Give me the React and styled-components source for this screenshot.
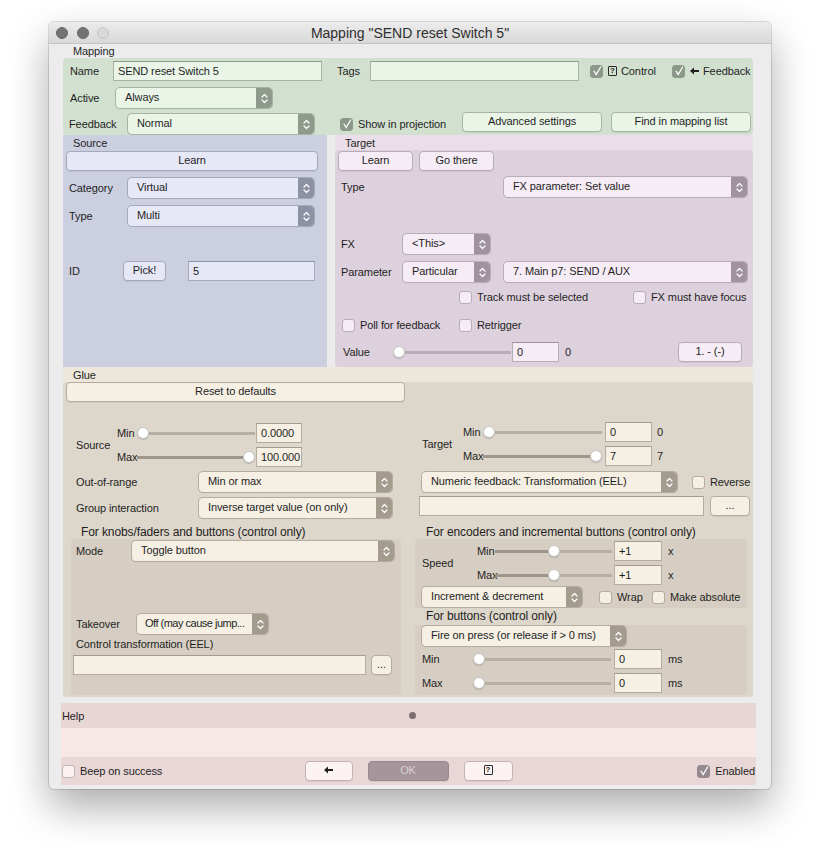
import React from 'react';
import styled, { createGlobalStyle, ThemeProvider } from 'styled-components';

// palettes for each coloured block of the dialog
const green = { ctrl: '#eaf5e8', border: '#a8b3a5', arrow: '#8e9a8c', check: '#8c988a', track: '#aab4a8', fill: '#97a195' };
const blue = { ctrl: '#e6e8f6', border: '#a5a9b9', arrow: '#8d91a4', check: '#8d91a4', track: '#aaaebf', fill: '#989cae' };
const pink = { ctrl: '#f5ecf5', border: '#b8acb8', arrow: '#a0929f', check: '#a0929f', track: '#b8acb7', fill: '#a1959f' };
const beige = { ctrl: '#f5efe4', border: '#b4ac9f', arrow: '#a39b8e', check: '#a39b8e', track: '#b7afa3', fill: '#9e968a' };
const rose = { ctrl: '#fcf2f1', border: '#c2b4b4', arrow: '#a3959a', check: '#978a8e', track: '#c0b2b2', fill: '#a89a9c' };

const GlobalStyle = createGlobalStyle`
  html, body { margin: 0; background: #fff; }
  body {
    font-family: "Liberation Sans", Arial, sans-serif;
    font-size: 11px;
    letter-spacing: -0.1px;
    color: #1f1f1f;
  }
`;

const Page = styled.div`
  padding: 22px 0 60px 49px;
`;

const Window = styled.div`
  width: 722px;
  height: 767px;
  background: #ececec;
  border-radius: 5px;
  overflow: hidden;
  display: flex;
  flex-direction: column;
  box-shadow: 0 0 0 1px rgba(0, 0, 0, 0.13), 0 18px 40px rgba(0, 0, 0, 0.33);
`;

const TitleBar = styled.div`
  height: 22px;
  flex: none;
  box-sizing: border-box;
  display: grid;
  grid-template-columns: 1fr auto 1fr;
  align-items: center;
  background: linear-gradient(#ececec, #d8d8d8);
  border-bottom: 1px solid #c3c3c3;
`;

const Lights = styled.div`
  display: flex;
  gap: 8.5px;
  padding-left: 7px;
`;

const Light = styled.span`
  width: 12px;
  height: 12px;
  border-radius: 50%;
  box-sizing: border-box;
  background: ${p => (p.$off ? '#d9d9d9' : '#737376')};
  border: 1px solid ${p => (p.$off ? '#c6c6c6' : '#68686b')};
`;

const Title = styled.div`
  font-size: 14px;
  letter-spacing: 0;
  color: #2e2e2e;
  white-space: nowrap;
`;

const Content = styled.div`
  padding: 0 18px 0 14px;
  display: flex;
  flex-direction: column;
`;

const Section = styled.div`
  background: ${p => p.$bg || 'transparent'};
  width: ${p => (p.$w ? `${p.$w}px` : 'auto')};
  flex: none;
  display: flex;
  flex-direction: column;
`;

const SectionLabel = styled.div`
  height: ${p => p.$h || 14}px;
  line-height: ${p => (p.$h || 14) + (p.$drop || 0) * 2}px;
  padding-left: 10px;
  white-space: nowrap;
`;

const Panel = styled.div`
  background: ${p => p.$bg};
  border-radius: 4px;
  padding-bottom: ${p => p.$pb || 0}px;
  flex: 1;
  display: flex;
  flex-direction: column;
`;

const Split = styled.div`
  display: flex;
  gap: 8px;
  height: 232px;
`;

const Row = styled.div`
  display: flex;
  align-items: center;
  height: ${p => p.$h || 20}px;
  margin-top: ${p => p.$mt || 0}px;
  padding-left: ${p => p.$pl || 0}px;
  flex: none;
`;

const Label = styled.span`
  width: ${p => (p.$w ? `${p.$w}px` : 'auto')};
  flex: none;
  white-space: nowrap;
`;

const Spacer = styled.span`
  width: ${p => p.$w}px;
  flex: none;
`;

const Field = styled.div`
  width: ${p => p.$w}px;
  height: ${p => p.$h || 20}px;
  flex: none;
  box-sizing: border-box;
  background: ${p => p.theme.ctrl};
  border: 1px solid ${p => p.theme.border};
  border-top-color: ${p => p.theme.arrow};
  padding-left: 4px;
  display: flex;
  align-items: center;
  white-space: nowrap;
`;

const Button = styled.div`
  width: ${p => p.$w}px;
  height: 20px;
  flex: none;
  box-sizing: border-box;
  padding-bottom: 2px;
  margin-top: ${p => (p.$raise ? -4 : 0)}px;
  border-radius: 4px;
  display: flex;
  align-items: center;
  justify-content: center;
  white-space: nowrap;
  background: ${p => (p.$disabled ? '#a4969a' : p.theme.ctrl)};
  color: ${p => (p.$disabled ? '#d9cfd2' : '#1f1f1f')};
  border: 1px solid ${p => (p.$disabled ? '#978a8e' : p.theme.border)};
  box-shadow: 0 1px 0 rgba(0, 0, 0, 0.06);
`;

const SelectBox = styled.div`
  width: ${p => p.$w}px;
  height: 20px;
  flex: none;
  box-sizing: border-box;
  display: flex;
  border-radius: 4px;
  overflow: hidden;
  background: ${p => p.theme.ctrl};
  box-shadow: 0 0 0 1px ${p => p.theme.border}, 0 1px 1px rgba(0, 0, 0, 0.12);
`;

const SelectText = styled.span`
  flex: 1;
  min-width: 0;
  padding-left: ${p => (p.$tight ? 8 : 9)}px;
  letter-spacing: ${p => (p.$tight ? '-0.5px' : 'inherit')};
  line-height: 18px;
  white-space: nowrap;
  overflow: hidden;
`;

const SelectArrow = styled.span`
  width: 16px;
  flex: none;
  display: flex;
  align-items: center;
  justify-content: center;
  background: ${p => p.theme.arrow};
`;

const ToggleWrap = styled.span`
  display: flex;
  align-items: center;
  gap: 5px;
  flex: none;
  width: ${p => (p.$w ? `${p.$w}px` : 'auto')};
  white-space: nowrap;
`;

const CheckBox = styled.span`
  width: 13px;
  height: 13px;
  flex: none;
  box-sizing: border-box;
  border-radius: 3px;
  display: flex;
  align-items: center;
  justify-content: center;
  background: ${p => (p.$on ? p.theme.check : p.theme.ctrl)};
  border: 1px solid ${p => (p.$on ? p.theme.check : p.theme.border)};
`;

const ToggleText = styled.span`
  display: inline-flex;
  align-items: center;
  gap: 4px;
`;

const HelpGlyph = styled.span`
  width: 9px;
  height: 10px;
  box-sizing: border-box;
  border: 1px solid #2a2a2a;
  border-radius: 1px;
  font-size: 8px;
  font-weight: bold;
  line-height: 8px;
  display: inline-flex;
  align-items: center;
  justify-content: center;
`;

const SliderTrack = styled.div`
  width: ${p => p.$w}px;
  height: 20px;
  flex: none;
  display: flex;
  align-items: center;
`;

const SliderFill = styled.span`
  flex: ${p => p.$grow} 1 0;
  height: 3px;
  background: ${p => p.theme.fill};
`;

const SliderRest = styled.span`
  flex: ${p => p.$grow} 1 0;
  height: 3px;
  background: ${p => p.theme.track};
`;

const Thumb = styled.span`
  width: 12px;
  height: 12px;
  flex: none;
  box-sizing: border-box;
  border-radius: 50%;
  background: #fff;
  border: 1px solid rgba(0, 0, 0, 0.22);
  box-shadow: 0 1px 1px rgba(0, 0, 0, 0.15);
`;

const RangeGroup = styled.div`
  display: flex;
  align-items: center;
  margin-top: ${p => p.$mt || 0}px;
  padding-left: ${p => p.$pl || 0}px;
`;

const RangeRows = styled.div`
  display: flex;
  flex-direction: column;
  gap: 4px;
`;

const Columns = styled.div`
  display: flex;
`;

const Column = styled.div`
  width: ${p => (p.$w ? `${p.$w}px` : 'auto')};
  flex: ${p => (p.$w ? 'none' : '1')};
  display: flex;
  flex-direction: column;
`;

const SubHeading = styled.div`
  height: ${p => p.$h || 13}px;
  line-height: ${p => p.$h || 13}px;
  margin-top: ${p => p.$mt || 0}px;
  padding-left: ${p => p.$pl || 0}px;
  font-size: 12px;
  white-space: nowrap;
`;

const SubBox = styled.div`
  width: ${p => p.$w}px;
  height: ${p => p.$h}px;
  margin-left: ${p => p.$ml || 0}px;
  background: #d6cec2;
  border-radius: 4px;
  display: flex;
  flex-direction: column;
`;

const Help = styled.div`
  margin: 6px -3px 0 -2px;
  display: flex;
  flex-direction: column;
`;

const HelpBar = styled.div`
  height: 25px;
  background: #e8d6d5;
  display: grid;
  grid-template-columns: 1fr auto 1fr;
  align-items: center;
  padding-left: 1px;
`;

const HelpDot = styled.span`
  width: 7px;
  height: 7px;
  margin-left: 7px;
  border-radius: 50%;
  background: #7b6e71;
`;

const HelpText = styled.div`
  height: 29px;
  background: #f7e7e5;
`;

const Footer = styled.div`
  height: 28px;
  background: #e8d7d6;
  display: grid;
  grid-template-columns: 1fr auto 1fr;
  align-items: center;
  padding: 0 1px;
`;

const FooterButtons = styled.div`
  display: flex;
  gap: 15px;
`;

const FooterSide = styled.div`
  display: flex;
  justify-content: ${p => (p.$end ? 'flex-end' : 'flex-start')};
`;

const Chevrons = () => (
  <svg width="7" height="11" viewBox="0 0 7 11" fill="none" stroke="#fff" strokeWidth="1.2" strokeLinecap="round" strokeLinejoin="round">
    <path d="M1 4 3.5 1.5 6 4" />
    <path d="M1 7 3.5 9.5 6 7" />
  </svg>
);

const ArrowLeft = () => (
  <svg width="9" height="8" viewBox="0 0 9 8">
    <path d="M0 4 4 0.5V3H9V5H4V7.5Z" fill="#1f1f1f" />
  </svg>
);

const Tick = () => (
  <svg width="10" height="10" viewBox="0 0 10 10">
    <path d="M2 5.2 4.2 8.6 8.6 1" fill="none" stroke="#fff" strokeWidth="1.2" strokeLinecap="round" />
  </svg>
);

function Select({ w, tight, children }) {
  return (
    <SelectBox $w={w}>
      <SelectText $tight={tight}>{children}</SelectText>
      <SelectArrow><Chevrons /></SelectArrow>
    </SelectBox>
  );
}

function Toggle({ on, w, children }) {
  return (
    <ToggleWrap $w={w}>
      <CheckBox $on={on}>{on && <Tick />}</CheckBox>
      <ToggleText>{children}</ToggleText>
    </ToggleWrap>
  );
}

function Slider({ w, pos }) {
  return (
    <SliderTrack $w={w}>
      <SliderFill $grow={pos} />
      <Thumb />
      <SliderRest $grow={1 - pos} />
    </SliderTrack>
  );
}

export default function App() {
  return (
    <>
      <GlobalStyle />
      <Page>
        <Window>
          <TitleBar>
            <Lights>
              <Light />
              <Light />
              <Light $off />
            </Lights>
            <Title>Mapping "SEND reset Switch 5"</Title>
            <span />
          </TitleBar>

          <Content>
            <ThemeProvider theme={green}>
              <Section>
                <SectionLabel>Mapping</SectionLabel>
                <Panel $bg="#d2e1cf" $pb={1}>
                  <Row $mt={3} $pl={7}>
                    <Label $w={43}>Name</Label>
                    <Field $w={209}>SEND reset Switch 5</Field>
                    <Spacer $w={15} />
                    <Label $w={33}>Tags</Label>
                    <Field $w={209} />
                    <Spacer $w={11} />
                    <Toggle on w={82}><HelpGlyph>?</HelpGlyph>Control</Toggle>
                    <Toggle on><ArrowLeft />Feedback</Toggle>
                  </Row>
                  <Row $mt={7} $pl={7}>
                    <Label $w={46}>Active</Label>
                    <Select w={156}>Always</Select>
                  </Row>
                  <Row $mt={6} $pl={6}>
                    <Label $w={59}>Feedback</Label>
                    <Select w={186}>Normal</Select>
                    <Spacer $w={26} />
                    <Toggle on w={122}>Show in projection</Toggle>
                    <Button $w={140} $raise>Advanced settings</Button>
                    <Spacer $w={9} />
                    <Button $w={140} $raise>Find in mapping list</Button>
                  </Row>
                </Panel>
              </Section>
            </ThemeProvider>

            <Split>
              <ThemeProvider theme={blue}>
                <Section $w={264} $bg="#cbcfe0">
                  <SectionLabel $h={15} $drop={1}>Source</SectionLabel>
                  <Panel $bg="#cbcfe0">
                    <Row $mt={1} $pl={3}>
                      <Button $w={252}>Learn</Button>
                    </Row>
                    <Row $mt={7} $pl={6}>
                      <Label $w={59}>Category</Label>
                      <Select w={186}>Virtual</Select>
                    </Row>
                    <Row $mt={8} $pl={6}>
                      <Label $w={59}>Type</Label>
                      <Select w={186}>Multi</Select>
                    </Row>
                    <Row $mt={35} $pl={6}>
                      <Label $w={54}>ID</Label>
                      <Button $w={43}>Pick!</Button>
                      <Spacer $w={22} />
                      <Field $w={127}>5</Field>
                    </Row>
                  </Panel>
                </Section>
              </ThemeProvider>

              <ThemeProvider theme={pink}>
                <Section $w={418} $bg="#e9dee9">
                  <SectionLabel $h={15} $drop={1}>Target</SectionLabel>
                  <Panel $bg="#ddd1dd">
                    <Row $mt={1} $pl={3}>
                      <Button $w={75}>Learn</Button>
                      <Spacer $w={6} />
                      <Button $w={75}>Go there</Button>
                    </Row>
                    <Row $mt={6} $pl={6}>
                      <Label $w={163}>Type</Label>
                      <Select w={243}>FX parameter: Set value</Select>
                    </Row>
                    <Row $mt={37} $pl={6}>
                      <Label $w={62}>FX</Label>
                      <Select w={87}>&lt;This&gt;</Select>
                    </Row>
                    <Row $mt={8} $pl={6}>
                      <Label $w={62}>Parameter</Label>
                      <Select w={87}>Particular</Select>
                      <Spacer $w={14} />
                      <Select w={243}>7. Main p7: SEND / AUX</Select>
                    </Row>
                    <Row $mt={5} $pl={124}>
                      <Toggle w={174}>Track must be selected</Toggle>
                      <Toggle>FX must have focus</Toggle>
                    </Row>
                    <Row $mt={8} $pl={7}>
                      <Toggle w={117}>Poll for feedback</Toggle>
                      <Toggle>Retrigger</Toggle>
                    </Row>
                    <Row $mt={7} $pl={8}>
                      <Label $w={50}>Value</Label>
                      <Slider w={118} pos={0} />
                      <Spacer $w={1} />
                      <Field $w={47}>0</Field>
                      <Spacer $w={6} />
                      <Label $w={113}>0</Label>
                      <Button $w={64}>1. - (-)</Button>
                    </Row>
                  </Panel>
                </Section>
              </ThemeProvider>
            </Split>

            <ThemeProvider theme={beige}>
              <Section $bg="#ece6db">
                <SectionLabel $h={15} $drop={0.5}>Glue</SectionLabel>
                <Panel $bg="#ddd6ca" $pb={2}>
                  <Row $pl={3}>
                    <Button $w={339}>Reset to defaults</Button>
                  </Row>
                  <Columns>
                    <Column $w={352}>
                      <RangeGroup $mt={21} $pl={13}>
                        <Label $w={41}>Source</Label>
                        <RangeRows>
                          <Row>
                            <Label $w={20}>Min</Label>
                            <Slider w={118} pos={0} />
                            <Spacer $w={1} />
                            <Field $w={46}>0.0000</Field>
                          </Row>
                          <Row>
                            <Label $w={20}>Max</Label>
                            <Slider w={118} pos={1} />
                            <Spacer $w={1} />
                            <Field $w={46}>100.000</Field>
                          </Row>
                        </RangeRows>
                      </RangeGroup>
                      <Row $mt={5} $pl={13}>
                        <Label $w={123}>Out-of-range</Label>
                        <Select w={193}>Min or max</Select>
                      </Row>
                      <Row $mt={6} $pl={13}>
                        <Label $w={123}>Group interaction</Label>
                        <Select w={193}>Inverse target value (on only)</Select>
                      </Row>
                      <SubHeading $mt={8} $pl={18}>For knobs/faders and buttons (control only)</SubHeading>
                      <SubBox $w={330} $h={156} $ml={8}>
                        <Row $mt={2} $pl={5}>
                          <Label $w={56}>Mode</Label>
                          <Select w={262}>Toggle button</Select>
                        </Row>
                        <Row $mt={53} $pl={5}>
                          <Label $w={61}>Takeover</Label>
                          <Select w={131} tight>Off (may cause jump...</Select>
                        </Row>
                        <Row $mt={2} $h={16} $pl={5}>
                          <Label>Control transformation (EEL)</Label>
                        </Row>
                        <Row $mt={3} $pl={2}>
                          <Field $w={293} />
                          <Spacer $w={5} />
                          <Button $w={21}>...</Button>
                        </Row>
                      </SubBox>
                    </Column>

                    <Column>
                      <RangeGroup $mt={20} $pl={7}>
                        <Label $w={41}>Target</Label>
                        <RangeRows>
                          <Row>
                            <Label $w={20}>Min</Label>
                            <Slider w={119} pos={0} />
                            <Spacer $w={3} />
                            <Field $w={47}>0</Field>
                            <Spacer $w={5} />
                            <Label>0</Label>
                          </Row>
                          <Row>
                            <Label $w={20}>Max</Label>
                            <Slider w={119} pos={1} />
                            <Spacer $w={3} />
                            <Field $w={47}>7</Field>
                            <Spacer $w={5} />
                            <Label>7</Label>
                          </Row>
                        </RangeRows>
                      </RangeGroup>
                      <Row $mt={6} $pl={7}>
                        <Select w={255}>Numeric feedback: Transformation (EEL)</Select>
                        <Spacer $w={15} />
                        <Toggle>Reverse</Toggle>
                      </Row>
                      <Row $mt={4} $pl={4}>
                        <Field $w={285} />
                        <Spacer $w={6} />
                        <Button $w={40}>...</Button>
                      </Row>
                      <SubHeading $mt={10} $pl={11}>For encoders and incremental buttons (control only)</SubHeading>
                      <SubBox $w={332} $h={69}>
                        <RangeGroup $mt={2} $pl={7}>
                          <Label $w={55}>Speed</Label>
                          <RangeRows>
                            <Row>
                              <Label $w={18}>Min</Label>
                              <Slider w={117} pos={0.5} />
                              <Spacer $w={2} />
                              <Field $w={48}>+1</Field>
                              <Spacer $w={6} />
                              <Label>x</Label>
                            </Row>
                            <Row>
                              <Label $w={18}>Max</Label>
                              <Slider w={117} pos={0.5} />
                              <Spacer $w={2} />
                              <Field $w={48}>+1</Field>
                              <Spacer $w={6} />
                              <Label>x</Label>
                            </Row>
                          </RangeRows>
                        </RangeGroup>
                        <Row $mt={2} $pl={7}>
                          <Select w={160}>Increment &amp; decrement</Select>
                          <Spacer $w={17} />
                          <Toggle w={53}>Wrap</Toggle>
                          <Toggle>Make absolute</Toggle>
                        </Row>
                      </SubBox>
                      <SubHeading $h={17} $pl={11}>For buttons (control only)</SubHeading>
                      <SubBox $w={332} $h={70}>
                        <Row $mt={1} $pl={7}>
                          <Select w={204}>Fire on press (or release if &gt; 0 ms)</Select>
                        </Row>
                        <Row $mt={3} $pl={7}>
                          <Label $w={51}>Min</Label>
                          <Slider w={138} pos={0} />
                          <Spacer $w={3} />
                          <Field $w={48}>0</Field>
                          <Spacer $w={6} />
                          <Label>ms</Label>
                        </Row>
                        <Row $mt={4} $pl={7}>
                          <Label $w={51}>Max</Label>
                          <Slider w={138} pos={0} />
                          <Spacer $w={3} />
                          <Field $w={48}>0</Field>
                          <Spacer $w={6} />
                          <Label>ms</Label>
                        </Row>
                      </SubBox>
                    </Column>
                  </Columns>
                </Panel>
              </Section>
            </ThemeProvider>

            <ThemeProvider theme={rose}>
              <Help>
                <HelpBar>
                  <Label>Help</Label>
                  <HelpDot />
                  <span />
                </HelpBar>
                <HelpText />
                <Footer>
                  <FooterSide>
                    <Toggle>Beep on success</Toggle>
                  </FooterSide>
                  <FooterButtons>
                    <Button $w={48}><ArrowLeft /></Button>
                    <Button $w={81} $disabled>OK</Button>
                    <Button $w={49}><HelpGlyph>?</HelpGlyph></Button>
                  </FooterButtons>
                  <FooterSide $end>
                    <Toggle on>Enabled</Toggle>
                  </FooterSide>
                </Footer>
              </Help>
            </ThemeProvider>
          </Content>
        </Window>
      </Page>
    </>
  );
}
